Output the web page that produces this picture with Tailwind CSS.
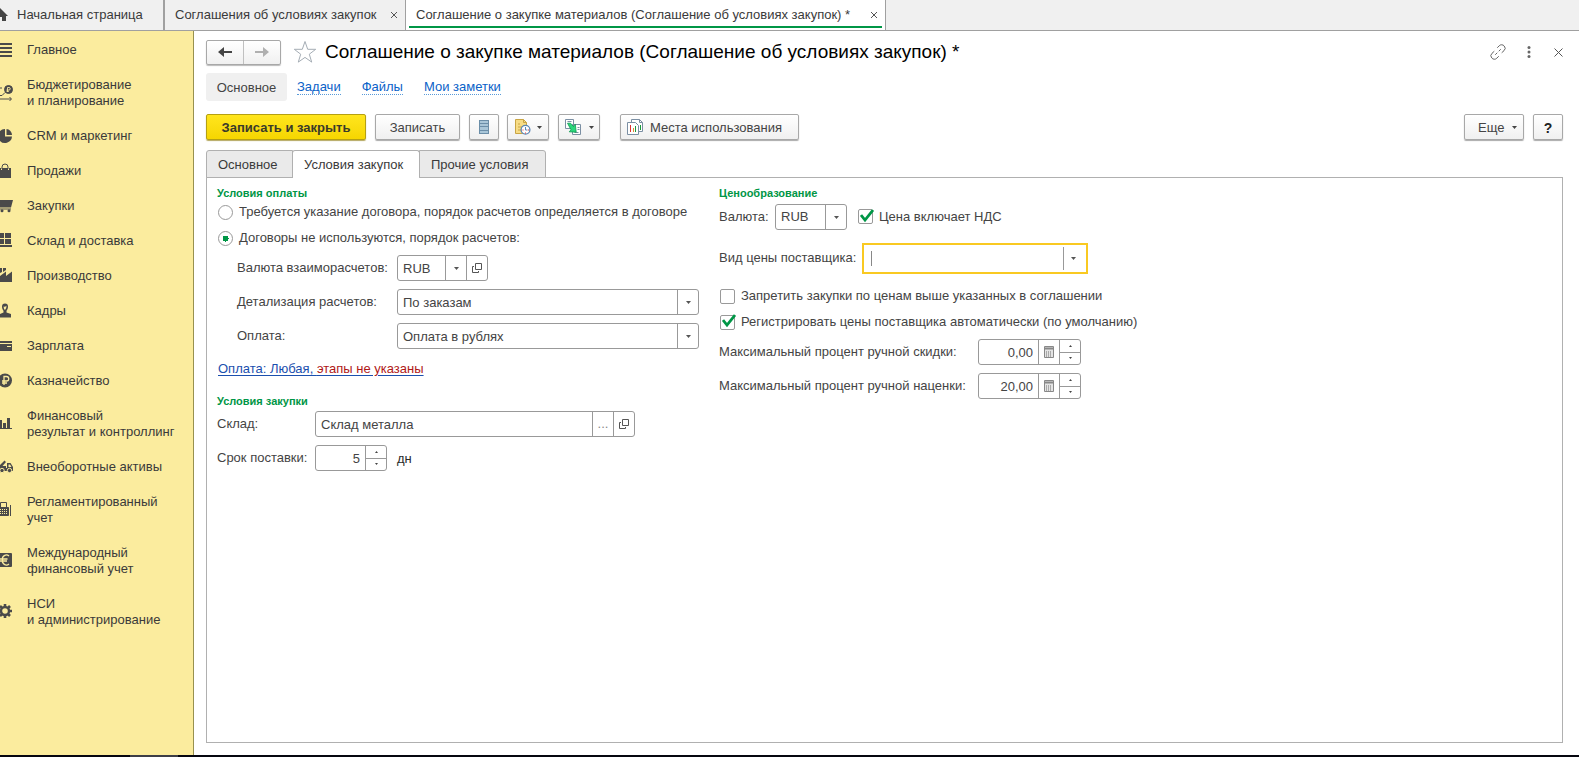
<!DOCTYPE html>
<html lang="ru">
<head>
<meta charset="utf-8">
<title>Соглашение о закупке материалов</title>
<script src="https://cdn.jsdelivr.net/npm/@tailwindcss/browser@4"></script>
</head>
<body class="flex min-h-screen flex-col bg-white font-['Liberation_Sans',Arial,sans-serif] text-[13px] leading-4 text-[#444]">

<nav aria-label="Открытые окна" class="flex h-[31px] border-b border-[#a0a0a0] bg-[#f0f0f0] text-[#3a3a3a]">
  <a href="#" class="flex w-[165px] items-center border-r-2 border-[#a0a0a0]">
    <svg class="h-4 w-2 shrink-0" viewBox="8 0 8 16" fill="#444"><path d="M8 1l8 8h-2v5h-4v-4H8z"/></svg>
    <span class="ml-[9px]">Начальная страница</span>
  </a>
  <div class="flex w-[241px] items-center justify-between border-r border-[#a0a0a0] pr-[7px] pl-[10px]">
    <a href="#" class="whitespace-nowrap">Соглашения об условиях закупок</a>
    <button type="button" aria-label="Закрыть вкладку"><svg class="size-2" viewBox="0 0 8 8" stroke="#555"><path d="M1 1l6 6M7 1L1 7"/></svg></button>
  </div>
  <div class="h-[30px] w-[480px] border-r border-[#a0a0a0] bg-white px-[3px]">
    <div class="flex h-7 items-center justify-between border-b-2 border-[#009646] pt-1 pr-[4px] pl-[7px]">
      <a href="#" aria-current="page" class="whitespace-nowrap">Соглашение о закупке материалов (Соглашение об условиях закупок) *</a>
      <button type="button" aria-label="Закрыть вкладку"><svg class="size-2" viewBox="0 0 8 8" stroke="#555"><path d="M1 1l6 6M7 1L1 7"/></svg></button>
    </div>
  </div>
</nav>

<div class="flex flex-1">
  <aside class="w-[194px] shrink-0 border-r border-[#98914f] bg-[#fbec9e] pt-[11px] text-[#3a3a3a]">
    <nav aria-label="Разделы" class="flex flex-col gap-[19px]">
      <a href="#" class="flex items-center gap-[14px]"><svg class="h-4 w-[13px] shrink-0" viewBox="0 0 13 16" fill="#4a4a4a"><path d="M0 1h12v2H0zM0 5h12v2H0zM0 9h12v2H0zM0 13h12v2H0z"/></svg>Главное</a>
      <a href="#" class="flex items-center gap-[14px]"><svg class="h-4 w-[13px] shrink-0" viewBox="0 0 13 16" fill="none" stroke="#4a4a4a"><circle cx="8.500" cy="4.500" r="4" fill="#4a4a4a"/><path d="M7.500 7V2.500h1.500a1.200 1.200 0 0 1 0 2.500H6.500M6.500 6.300h2.500" stroke="#fbec9e" stroke-width=".9"/><path d="M0 3h2M0 10.500h2l3-3M0 14h11M9.500 12l2 2-2 2"/></svg><span>Бюджетирование<br>и планирование</span></a>
      <a href="#" class="flex items-center gap-[14px]"><svg class="h-4 w-[13px] shrink-0" viewBox="0 0 13 16" fill="#4a4a4a"><path d="M5 1v7.500h7A7 7 0 0 1 0 12.900V2.900A7 7 0 0 1 5 1z"/><path d="M6.500 1a6 6 0 0 1 5.500 6H6.500z"/></svg>CRM и маркетинг</a>
      <a href="#" class="flex items-center gap-[14px]"><svg class="h-4 w-[13px] shrink-0" viewBox="0 0 13 16" fill="#4a4a4a"><path d="M0 5h1v2h1V5h6v2h1V5h2v10H0z"/><path d="M2 6V4a3 3 0 0 1 6 0v2" fill="none" stroke="#4a4a4a"/></svg>Продажи</a>
      <a href="#" class="flex items-center gap-[14px]"><svg class="h-4 w-[13px] shrink-0" viewBox="0 0 13 16" fill="#4a4a4a"><path d="M0 2h13l-2 7.500H0zM0 10.500h11v1H0z"/><circle cx="2" cy="12.800" r="1.500"/><circle cx="9" cy="12.800" r="1.500"/></svg>Закупки</a>
      <a href="#" class="flex items-center gap-[14px]"><svg class="h-4 w-[13px] shrink-0" viewBox="0 0 13 16" fill="#4a4a4a"><path d="M0 0h4v5H0zM5 0h6v5H5zM0 6h4v5H0zM5 6h6v5H5zM0 12h12v2H0z"/></svg>Склад и доставка</a>
      <a href="#" class="flex items-center gap-[14px]"><svg class="h-4 w-[13px] shrink-0" viewBox="0 0 13 16" fill="#4a4a4a"><path d="M0 0h2v4l-2 1zM3 0h3v2L3 4zM0 8l6-4.500V8l6-4.500V14H0z"/></svg>Производство</a>
      <a href="#" class="flex items-center gap-[14px]"><svg class="h-4 w-[13px] shrink-0" viewBox="0 0 13 16" fill="#4a4a4a"><path d="M2 3.500a3 3 0 0 1 6 0c0 2-.8 3.500-1.500 4.200V9.500L11 11v3.500H0V11l3.500-1.500V7.700C2.800 7 2 5.500 2 3.500z"/><path d="M3.500 3.500q1.500.5 3-.7.2 2.500-1.500 4.200Q3.600 5.800 3.500 3.500z" fill="#fbec9e"/></svg>Кадры</a>
      <a href="#" class="flex items-center gap-[14px]"><svg class="h-4 w-[13px] shrink-0" viewBox="0 0 13 16" fill="#4a4a4a"><path d="M0 3h12v2H0zM0 6h12v7H0z"/><path d="M7 8h4v1H7z" fill="#fbec9e"/></svg>Зарплата</a>
      <a href="#" class="flex items-center gap-[14px]"><svg class="h-4 w-[13px] shrink-0" viewBox="0 0 13 16" fill="none"><circle cx="5" cy="7.500" r="7" fill="#4a4a4a"/><path d="M4 12V3.500h2.500a2.200 2.200 0 0 1 0 4.500H2M2 10h5" stroke="#fbec9e" stroke-width="1.300"/></svg>Казначейство</a>
      <a href="#" class="flex items-center gap-[14px]"><svg class="h-4 w-[13px] shrink-0" viewBox="0 0 13 16" fill="#4a4a4a"><path d="M0 4h2v8H0zM3 7h3v5H3zM7 2h3v10H7zM0 12h12v1H0z"/></svg><span>Финансовый<br>результат и контроллинг</span></a>
      <a href="#" class="flex items-center gap-[14px]"><svg class="h-4 w-[13px] shrink-0" viewBox="0 0 13 16" fill="#4a4a4a"><path d="M0 6l4.500-4.500L6 3 2.500 7H6v2h1V4h3.500L13 8v4H0V8z"/><path d="M8.500 5.500H10l1.500 2.500h-3z" fill="#fbec9e"/><g stroke="#fbec9e"><circle cx="2" cy="11.500" r="2.200"/><circle cx="9.500" cy="11.500" r="2.200"/></g></svg>Внеоборотные активы</a>
      <a href="#" class="flex items-center gap-[14px]"><svg class="h-4 w-[13px] shrink-0" viewBox="0 0 13 16" fill="none" stroke="#4a4a4a"><path d="M.5 5V.500h6V5"/><path d="M0 5.500h8.500v8H0z" fill="#4a4a4a"/><path d="M0 7.500h8M0 9.500h8M0 11.500h8" stroke="#fbec9e" stroke-dasharray="1 1"/><path d="M10.500 3v11"/></svg><span>Регламентированный<br>учет</span></a>
      <a href="#" class="flex items-center gap-[14px]"><svg class="h-4 w-[13px] shrink-0" viewBox="0 0 13 16" fill="none"><rect x="-2" y="0" width="14" height="14" rx="1" fill="#4a4a4a"/><path d="M9 3A4 4 0 0 0 2.500 7a4 4 0 0 0 6.500 4M0 6h7.500M0 8h7" stroke="#fbec9e" stroke-width="1.300"/></svg><span>Международный<br>финансовый учет</span></a>
      <a href="#" class="flex items-center gap-[14px]"><svg class="h-4 w-[13px] shrink-0" viewBox="0 0 13 16" fill="none" stroke="#4a4a4a"><circle cx="5" cy="7" r="4" stroke-width="2.400"/><path d="M5 0v3M5 11v3M9 7h3M0 2l2 2M10 2L8 4M0 12l2-2M10 12l-2-2" stroke-width="2.600"/></svg><span>НСИ<br>и администрирование</span></a>
    </nav>
  </aside>

  <main class="flex min-w-0 flex-1 flex-col pt-2 pr-4 pb-3 pl-3">
    <header class="flex items-center">
      <div class="flex h-[25px] w-[75px] rounded-xs border border-[#a8a8a8] bg-linear-to-b from-white to-[#f0f0f0] shadow-[0_1px_1px_#bbb]">
        <button type="button" aria-label="Назад" class="flex flex-1 items-center justify-center border-r border-[#c0c0c0]"><svg class="h-3 w-[14px]" viewBox="0 0 14 12" fill="#444"><path d="M0 6l6-5v4h8v2H6v4z"/></svg></button>
        <button type="button" aria-label="Вперед" class="flex flex-1 items-center justify-center"><svg class="h-3 w-[14px]" viewBox="0 0 14 12" fill="#b0b0b0"><path d="M14 6L8 1v4H0v2h8v4z"/></svg></button>
      </div>
      <button type="button" aria-label="В избранное" class="ml-3"><svg class="size-6" viewBox="0 0 24 24" fill="none" stroke="#a5adb5"><path d="M12 1.500l2.700 7.800h8l-6.400 4.900 2.400 7.900L12 17.400l-6.700 4.700 2.400-7.900-6.400-4.900h8z"/></svg></button>
      <h1 class="ml-2 flex-1 text-[19px] leading-[26px] whitespace-nowrap text-black">Соглашение о закупке материалов (Соглашение об условиях закупок) *</h1>
      <div class="flex items-center gap-[15px]">
        <button type="button" aria-label="Ссылка"><svg class="size-4" viewBox="0 0 16 16" fill="none" stroke="#666" stroke-linecap="round"><path d="M7.500 3.500l1.700-1.700a3.300 3.300 0 0 1 5 .2 3.300 3.300 0 0 1-.2 4.700L12 8.500M8.500 12.500l-1.700 1.700a3.300 3.300 0 0 1-5-.2 3.300 3.300 0 0 1 .2-4.700L4 7.500M5.500 10.500l1.500-1.500M9 7l1.500-1.500"/></svg></button>
        <button type="button" aria-label="Меню"><svg class="h-3 w-4" viewBox="0 0 16 12" fill="#666"><circle cx="8" cy="1.500" r="1.500"/><circle cx="8" cy="6" r="1.500"/><circle cx="8" cy="10.500" r="1.500"/></svg></button>
        <button type="button" aria-label="Закрыть" class="ml-[2px]"><svg class="size-[9px]" viewBox="0 0 9 9" stroke="#555"><path d="M.5.5l8 8M8.500.5l-8 8"/></svg></button>
      </div>
    </header>

    <nav aria-label="Подразделы" class="mt-2 flex h-7 items-center">
      <a href="#" aria-current="page" class="flex h-7 w-[81px] items-center justify-center rounded-[3px] bg-[#f0f0f0] pt-px">Основное</a>
      <a href="#" class="ml-[10px] border-b border-dotted border-[#5a9ad8] leading-[15px] text-[#0a62c8]">Задачи</a>
      <a href="#" class="ml-[21px] border-b border-dotted border-[#5a9ad8] leading-[15px] text-[#0a62c8]">Файлы</a>
      <a href="#" class="ml-[21px] border-b border-dotted border-[#5a9ad8] leading-[15px] text-[#0a62c8]">Мои заметки</a>
    </nav>

    <div class="mt-[13px] flex h-[26px]">
      <button type="button" class="w-40 rounded-xs border border-[#b5a012] bg-linear-to-b from-[#ffe51c] to-[#f6d600] pt-px font-bold text-[#3a3a2a] shadow-[0_1px_1px_#b5a860]">Записать и закрыть</button>
      <button type="button" class="ml-[9px] w-[85px] rounded-xs border border-[#a8a8a8] bg-linear-to-b from-white to-[#f0f0f0] pt-px shadow-[0_1px_1px_#aaa]">Записать</button>
      <button type="button" aria-label="Реестр" class="ml-[9px] flex w-[30px] items-center justify-center rounded-xs border border-[#a8a8a8] bg-linear-to-b from-white to-[#f0f0f0] shadow-[0_1px_1px_#aaa]"><svg class="h-[14px] w-[10px]" viewBox="0 0 10 14"><path d="M0 0h10v14H0z" fill="#6b8ea8"/><path d="M1 1h8v2H1zM1 4h8v2H1zM1 7h8v3H1zM1 11h8v2H1z" fill="#a9c6d8"/></svg></button>
      <button type="button" aria-label="Напоминания" class="ml-2 flex w-[42px] items-center rounded-xs border border-[#a8a8a8] bg-linear-to-b from-white to-[#f0f0f0] pl-[7px] shadow-[0_1px_1px_#aaa]"><svg class="size-4" viewBox="0 0 16 16" fill="none"><path d="M.5.500h8l3 3v11H.5z" fill="#f7dc85" stroke="#c9a544"/><path d="M8.500.500v3h3M3 5h2M3 8h5M3 11h3" stroke="#c9a544"/><circle cx="10.500" cy="10.800" r="4.400" fill="#fff" stroke="#5a86b5" stroke-width="1.300"/><path d="M10.500 8v3h2" stroke="#5a86b5"/><path d="M7.500 11h1M13 11h1M10 14h1" stroke="#e33"/></svg><svg class="ml-[6px] h-[3px] w-[5px]" viewBox="0 0 5 3" fill="#444"><path d="M0 0h5L2.500 3z"/></svg></button>
      <button type="button" aria-label="Создать на основании" class="ml-[9px] flex w-[42px] items-center rounded-xs border border-[#a8a8a8] bg-linear-to-b from-white to-[#f0f0f0] pl-[6px] shadow-[0_1px_1px_#aaa]"><svg class="size-4" viewBox="0 0 16 16" fill="none"><path d="M.5.500h8v9h-8zM7.500 5.500h8v10h-8z" fill="#fff" stroke="#7b8fa3"/><path d="M2.500 2.500h4M12.500 8.500h2M12.500 10.500h2M9.500 13.500h4" stroke="#7b8fa3"/><path d="M2.500 4.200h3l3 3.300 1.800-2.300.9 8-7-.4 1.800-2z" fill="#2bd67b" stroke="#0e9b50" stroke-width=".8"/></svg><svg class="ml-[8px] h-[3px] w-[5px]" viewBox="0 0 5 3" fill="#444"><path d="M0 0h5L2.500 3z"/></svg></button>
      <button type="button" class="ml-5 flex w-[179px] items-center rounded-xs border border-[#a8a8a8] bg-linear-to-b from-white to-[#f0f0f0] pl-[6px] shadow-[0_1px_1px_#aaa]"><svg class="size-4" viewBox="0 0 16 16" fill="none"><path d="M4.500.500h8l3 3v9h-11z" fill="#fff" stroke="#7b8fa3"/><path d="M12.500.500v3h3" stroke="#7b8fa3"/><path d="M.5 3.500h8l3 3v9H.5z" fill="#fff" stroke="#7b8fa3"/><path d="M3.500 6v7" stroke="#d33"/><path d="M13.500 6v5" stroke="#1a9a3a"/><path d="M6.500 9v4" stroke="#e08a30"/><path d="M8.500 7v6" stroke="#1a9a3a"/></svg><span class="mt-px ml-[7px]">Места использования</span></button>
      <button type="button" class="ml-auto flex w-[60px] items-center justify-between rounded-xs border border-[#a8a8a8] bg-linear-to-b from-white to-[#f0f0f0] pt-px pr-[6px] pl-[13px] shadow-[0_1px_1px_#aaa]">Еще<svg class="h-[3px] w-[5px]" viewBox="0 0 5 3" fill="#444"><path d="M0 0h5L2.500 3z"/></svg></button>
      <button type="button" aria-label="Справка" class="ml-[9px] w-[30px] rounded-xs border border-[#a8a8a8] bg-linear-to-b from-white to-[#f0f0f0] pt-px text-[14px] font-bold text-[#222] shadow-[0_1px_1px_#aaa]">?</button>
    </div>

    <div role="tablist" class="z-10 mt-[10px] -mb-px flex h-7 text-[#3a3a3a]">
      <button type="button" role="tab" aria-selected="false" class="w-[87px] rounded-tl-[3px] border border-[#b0b0b0] bg-[#eaeaea] pt-px pl-[11px] text-left">Основное</button>
      <button type="button" role="tab" aria-selected="true" class="-ml-px w-[128px] rounded-t-[3px] border border-b-0 border-[#b0b0b0] bg-white pl-[11px] text-left">Условия закупок</button>
      <button type="button" role="tab" aria-selected="false" class="-ml-px w-[127px] rounded-tr-[3px] border border-[#b0b0b0] bg-[#eaeaea] pt-px pl-[11px] text-left">Прочие условия</button>
    </div>

    <form class="flex flex-1 items-start border border-[#b0b0b0] pt-2 pl-[10px]">
      <div class="w-[502px] shrink-0">
        <fieldset>
          <legend class="text-[11px] leading-[14px] font-bold text-[#009646]">Условия оплаты</legend>
          <label class="mt-1 flex items-center gap-[6px] pl-px whitespace-nowrap"><input type="radio" name="terms" class="size-[15px] appearance-none rounded-full border border-[#999] bg-white">Требуется указание договора, порядок расчетов определяется в договоре</label>
          <label class="mt-[10px] flex items-center gap-[6px] pl-px whitespace-nowrap"><input type="radio" name="terms" checked class="size-[15px] appearance-none rounded-full border border-[#999] bg-[radial-gradient(circle,#009646_0,#009646_3px,#fff_3px)]">Договоры не используются, порядок расчетов:</label>
          <div class="mt-[9px] grid grid-cols-[160px_302px] items-center gap-y-2 pl-5">
            <label for="cur1">Валюта взаиморасчетов:</label>
            <div class="flex h-[26px] w-[91px] divide-x divide-[#999] rounded-[3px] border border-[#999]">
              <select id="cur1" class="min-w-0 flex-1 appearance-none pt-px pl-[5px]"><option>RUB</option></select>
              <button type="button" aria-label="Выбрать" class="flex w-[21px] items-center justify-center"><svg class="h-[3px] w-[5px]" viewBox="0 0 5 3" fill="#555"><path d="M0 0h5L2.500 3z"/></svg></button>
              <button type="button" aria-label="Открыть" class="flex w-5 items-center justify-center"><svg class="size-[10px]" viewBox="0 0 10 10" fill="none" stroke="#555"><path d="M3.500.500h6v6h-6zM2 3.500H.5v6h6V8"/></svg></button>
            </div>
            <label for="det">Детализация расчетов:</label>
            <div class="flex h-[26px] divide-x divide-[#999] rounded-[3px] border border-[#999]">
              <select id="det" class="min-w-0 flex-1 appearance-none pt-px pl-[5px]"><option>По заказам</option></select>
              <button type="button" aria-label="Выбрать" class="flex w-5 items-center justify-center"><svg class="h-[3px] w-[5px]" viewBox="0 0 5 3" fill="#555"><path d="M0 0h5L2.500 3z"/></svg></button>
            </div>
            <label for="pay">Оплата:</label>
            <div class="flex h-[26px] divide-x divide-[#999] rounded-[3px] border border-[#999]">
              <select id="pay" class="min-w-0 flex-1 appearance-none pt-px pl-[5px]"><option>Оплата в рублях</option></select>
              <button type="button" aria-label="Выбрать" class="flex w-5 items-center justify-center"><svg class="h-[3px] w-[5px]" viewBox="0 0 5 3" fill="#555"><path d="M0 0h5L2.500 3z"/></svg></button>
            </div>
          </div>
          <p class="mt-3 pl-px"><a href="#" class="text-[#1b4fae] underline underline-offset-2">Оплата: Любая, <span class="text-[#b01818]">этапы не указаны</span></a></p>
        </fieldset>
        <fieldset class="mt-[17px]">
          <legend class="text-[11px] leading-[14px] font-bold text-[#009646]">Условия закупки</legend>
          <div class="mt-[3px] grid grid-cols-[98px_320px] items-center gap-y-2">
            <label for="store">Склад:</label>
            <div class="flex h-[26px] divide-x divide-[#999] rounded-[3px] border border-[#999]">
              <input id="store" value="Склад металла" class="min-w-0 flex-1 pt-px pl-[5px]">
              <button type="button" aria-label="Подобрать" class="w-[21px] text-[#888]">...</button>
              <button type="button" aria-label="Открыть" class="flex w-5 items-center justify-center"><svg class="size-[10px]" viewBox="0 0 10 10" fill="none" stroke="#555"><path d="M3.500.500h6v6h-6zM2 3.500H.5v6h6V8"/></svg></button>
            </div>
            <label for="term" class="whitespace-nowrap">Срок поставки:</label>
            <div class="flex items-center gap-[10px]">
              <div class="flex h-[26px] w-[72px] divide-x divide-[#999] rounded-[3px] border border-[#999]">
                <input id="term" value="5" class="min-w-0 flex-1 pt-px pr-[5px] text-right">
                <div class="flex w-5 flex-col divide-y divide-[#999]">
                  <button type="button" aria-label="Больше" class="flex flex-1 items-center justify-center"><svg class="h-[2px] w-[3px]" viewBox="0 0 3 2" fill="#444"><path d="M0 2h3L1.500 0z"/></svg></button>
                  <button type="button" aria-label="Меньше" class="flex flex-1 items-center justify-center"><svg class="h-[2px] w-[3px]" viewBox="0 0 3 2" fill="#444"><path d="M0 0h3L1.500 2z"/></svg></button>
                </div>
              </div>
              <span class="pt-px text-[#2a2a2a]">дн</span>
            </div>
          </div>
        </fieldset>
      </div>

      <fieldset>
        <legend class="text-[11px] leading-[14px] font-bold text-[#009646]">Ценообразование</legend>
        <div class="mt-1 flex items-center">
          <label for="cur2" class="w-14 pb-px">Валюта:</label>
          <div class="flex h-[26px] w-[72px] divide-x divide-[#999] rounded-[3px] border border-[#999]">
            <select id="cur2" class="min-w-0 flex-1 appearance-none pl-[5px]"><option>RUB</option></select>
            <button type="button" aria-label="Выбрать" class="flex w-5 items-center justify-center"><svg class="h-[3px] w-[5px]" viewBox="0 0 5 3" fill="#555"><path d="M0 0h5L2.500 3z"/></svg></button>
          </div>
          <label class="relative ml-[11px] flex items-center gap-[6px] pb-px"><input type="checkbox" checked class="size-[15px] appearance-none rounded-xs border border-[#999]"><svg class="absolute top-0 left-[2px] h-[14px] w-[14px]" viewBox="0 0 14 14" fill="none" stroke="#009646" stroke-width="2.800"><path d="M1 6l4 5L13 1"/></svg>Цена включает НДС</label>
        </div>
        <div class="mt-[13px] flex items-center">
          <label for="kind" class="w-[143px] pb-[2px] whitespace-nowrap">Вид цены поставщика:</label>
          <div class="flex h-[31px] w-[226px] items-center border-2 border-[#f9c921]">
            <span class="ml-[7px] h-[15px] w-px bg-[#888]"></span>
            <input id="kind" class="min-w-0 flex-1 outline-none">
            <button type="button" aria-label="Выбрать" class="flex h-[23px] w-[23px] items-center border-l border-[#999] pl-[7px]"><svg class="h-[3px] w-[5px]" viewBox="0 0 5 3" fill="#555"><path d="M0 0h5L2.500 3z"/></svg></button>
          </div>
        </div>
        <label class="mt-[14px] flex items-center gap-[6px] pl-px"><input type="checkbox" class="size-[15px] appearance-none rounded-xs border border-[#999]">Запретить закупки по ценам выше указанных в соглашении</label>
        <label class="relative mt-[10px] flex items-center gap-[6px] pl-px"><input type="checkbox" checked class="size-[15px] appearance-none rounded-xs border border-[#999]"><svg class="absolute top-0 left-[3px] h-[14px] w-[14px]" viewBox="0 0 14 14" fill="none" stroke="#009646" stroke-width="2.800"><path d="M1 6l4 5L13 1"/></svg>Регистрировать цены поставщика автоматически (по умолчанию)</label>
        <div class="mt-[9px] grid grid-cols-[259px_103px] items-center gap-y-2">
          <label for="disc" class="whitespace-nowrap">Максимальный процент ручной скидки:</label>
          <div class="flex h-[26px] divide-x divide-[#999] rounded-[3px] border border-[#999]">
            <input id="disc" value="0,00" class="min-w-0 flex-1 pt-px pr-[5px] text-right">
            <button type="button" aria-label="Калькулятор" class="flex w-[21px] items-center justify-center"><svg class="h-3 w-[10px]" viewBox="0 0 10 12" fill="none"><path d="M.5.500h9v11h-9z" fill="#e4e4e4" stroke="#888"/><path d="M1 2.500h8" stroke="#888" stroke-width="2"/><path d="M2.500 5v6M4.500 5v6M6.500 5v6" stroke="#aaa"/></svg></button>
            <div class="flex w-5 flex-col divide-y divide-[#999]">
              <button type="button" aria-label="Больше" class="flex flex-1 items-center justify-center"><svg class="h-[2px] w-[3px]" viewBox="0 0 3 2" fill="#444"><path d="M0 2h3L1.500 0z"/></svg></button>
              <button type="button" aria-label="Меньше" class="flex flex-1 items-center justify-center"><svg class="h-[2px] w-[3px]" viewBox="0 0 3 2" fill="#444"><path d="M0 0h3L1.500 2z"/></svg></button>
            </div>
          </div>
          <label for="markup" class="whitespace-nowrap">Максимальный процент ручной наценки:</label>
          <div class="flex h-[26px] divide-x divide-[#999] rounded-[3px] border border-[#999]">
            <input id="markup" value="20,00" class="min-w-0 flex-1 pt-px pr-[5px] text-right">
            <button type="button" aria-label="Калькулятор" class="flex w-[21px] items-center justify-center"><svg class="h-3 w-[10px]" viewBox="0 0 10 12" fill="none"><path d="M.5.500h9v11h-9z" fill="#e4e4e4" stroke="#888"/><path d="M1 2.500h8" stroke="#888" stroke-width="2"/><path d="M2.500 5v6M4.500 5v6M6.500 5v6" stroke="#aaa"/></svg></button>
            <div class="flex w-5 flex-col divide-y divide-[#999]">
              <button type="button" aria-label="Больше" class="flex flex-1 items-center justify-center"><svg class="h-[2px] w-[3px]" viewBox="0 0 3 2" fill="#444"><path d="M0 2h3L1.500 0z"/></svg></button>
              <button type="button" aria-label="Меньше" class="flex flex-1 items-center justify-center"><svg class="h-[2px] w-[3px]" viewBox="0 0 3 2" fill="#444"><path d="M0 0h3L1.500 2z"/></svg></button>
            </div>
          </div>
        </div>
      </fieldset>
    </form>
  </main>
</div>

<footer class="h-[2px] bg-[#05060f]"><div class="ml-[130px] h-[2px] w-12 bg-[#3c3e46]"></div></footer>
</body>
</html>
